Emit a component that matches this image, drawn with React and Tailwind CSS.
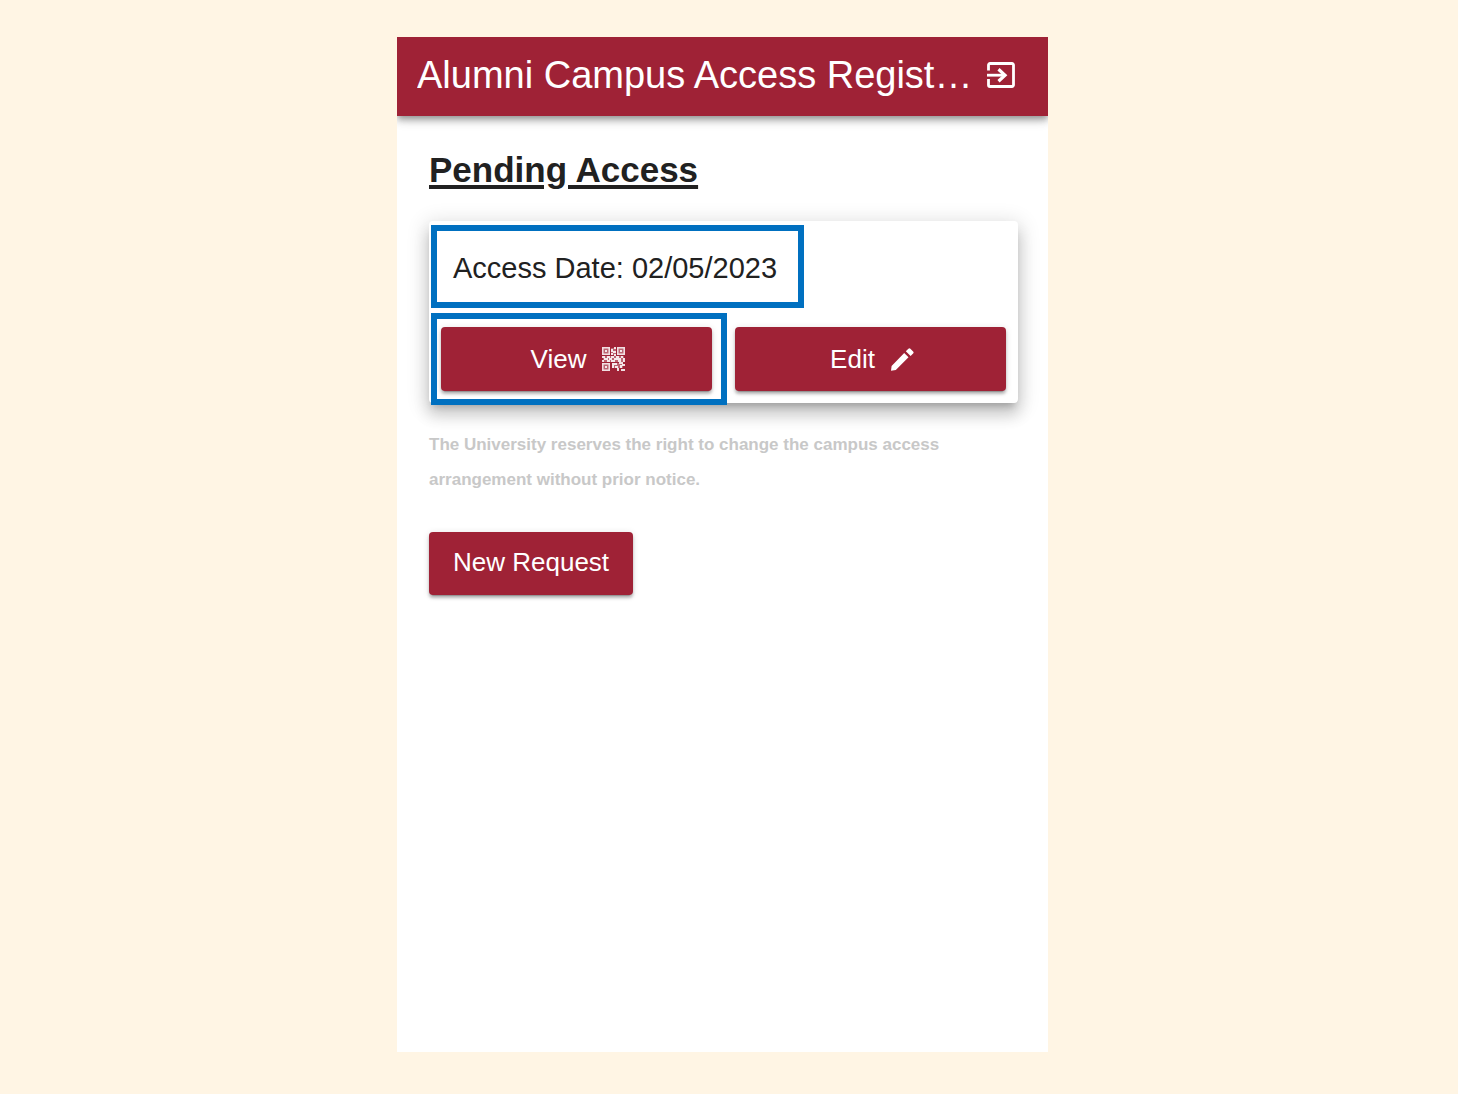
import React from "react";

const buttonBase =
  "flex items-center justify-center rounded bg-[#9f2236] text-[26px] leading-8 text-white shadow-[0_4px_1px_-3px_rgba(0,0,0,0.2),0_3px_3px_rgba(0,0,0,0.24),0_1px_7px_rgba(0,0,0,0.12)]";

function ExitIcon() {
  return (
    <svg viewBox="0 0 28 26" className="h-[26px] w-7" fill="none" stroke="currentColor" aria-hidden="true">
      <path d="M1.5 8.5V3a1.5 1.5 0 0 1 1.5-1.5h22A1.5 1.5 0 0 1 26.5 3v20a1.5 1.5 0 0 1-1.5 1.5H3A1.5 1.5 0 0 1 1.5 23v-6" strokeWidth="2.8" />
      <path d="M0 13.2h18" strokeWidth="2.8" />
      <path d="M11.5 7.2l6.5 6-6.5 6" strokeWidth="3.2" />
    </svg>
  );
}

function QrIcon() {
  return (
    <svg viewBox="0 0 23 24" className="h-6 w-[23px]" fill="currentColor" fillOpacity="0.85" aria-hidden="true">
      <path fillOpacity="0.3" d="M1 1h6v6H1zM16 1h6v6h-6zM1 17h6v6H1zM1 9h21v6H1zM9 1h5v7H9zM10 16h11v5H10z" />
      <path fillRule="evenodd" d="M0 0h8v8H0zM1.5 1.5v5h5v-5zM15 0h8v8h-8zM16.5 1.5v5h5v-5zM0 16h8v8H0zM1.5 17.5v5h5v-5z" />
      <path d="M3 3h2v2H3zM18 3h2v2h-2zM3 19h2v2H3zM12 0h2v2h-2zM9 2h2v3H9zM11 4h3v2h-3zM9 6h2v2H9zM12 7h2v2h-2zM0 9h3v2H0zM5 9h3v2H5zM9 9h3v2H9zM14 9h3v2h-3zM19 9h2v2h-2zM2 11h4v2H2zM7 11h3v2H7zM12 11h7v2h-7zM21 11h2v4h-2zM0 13h2v2H0zM5 13h3v2H5zM9 13h4v2H9zM16 13h3v2h-3zM10 16h5v2h-5zM17 15h4v2h-4zM10 18h2v3h-2zM13 19h3v2h-3zM18 18h2v3h-2zM20 17h3v2h-3zM15 21h2v3h-2zM19 22h4v2h-4z" />
    </svg>
  );
}

function PencilIcon() {
  return (
    <svg viewBox="0 0 23 23" className="h-[23px] w-[23px]" fill="currentColor" aria-hidden="true">
      <path d="M0 22.8L.6 18 13.200 5l4.300 4.300L4.800 22zM14.800 3.300l2.600-2.600a1.400 1.400 0 0 1 2 0l2.700 2.700a1.400 1.400 0 0 1 0 2l-2.500 2.500z" />
    </svg>
  );
}

export default function App() {
  return (
    <div className="min-h-screen bg-[#fff5e4] pt-[37px] pr-[29px] pb-[42px] pl-4 font-['Liberation_Sans',Arial,sans-serif] text-[#212121]">
      <div className="mx-auto min-h-[calc(100vh-79px)] w-full max-w-[651px] bg-white">
        <header className="flex items-start justify-between gap-2 bg-[#9f2236] pt-[15px] pr-[33px] pb-[17px] pl-5 text-white shadow-[0_3px_6px_-1px_rgba(0,0,0,0.3),0_6px_7px_rgba(0,0,0,0.14),0_1px_15px_rgba(0,0,0,0.12)] [clip-path:inset(0_0_-16px_0)]">
          <h1 className="truncate text-[38px] leading-[47px] font-normal">Alumni Campus Access Regist…</h1>
          <button type="button" aria-label="Sign out" className="mt-2.5 shrink-0">
            <ExitIcon />
          </button>
        </header>

        <main className="pt-8 pr-[30px] pl-8">
          <h2 className="text-[35px] leading-[44px] font-bold underline decoration-4 underline-offset-3">Pending Access</h2>

          <section className="mt-[29px] rounded bg-white px-3 pb-3 shadow-[0_7px_7px_-4px_rgba(0,0,0,0.2),0_12px_15px_1px_rgba(0,0,0,0.14),0_4px_20px_4px_rgba(0,0,0,0.12)]">
            <div className="flex h-[106px] items-center pb-3 pl-3">
              <div className="relative text-[29px] leading-9">
                Access Date: 02/05/2023
                <span className="pointer-events-none absolute -top-[25px] -right-[27px] -bottom-[22px] -left-[22px] border-6 border-[#0070c0]" />
              </div>
            </div>
            <div className="grid grid-cols-2 gap-[23px]">
              <div className="relative">
                <button type="button" className={`${buttonBase} h-16 w-full gap-4 pl-[3px]`}>
                  View
                  <QrIcon />
                </button>
                <span className="pointer-events-none absolute -top-3.5 -right-[15px] -bottom-3.5 -left-2.5 border-6 border-[#0070c0]" />
              </div>
              <button type="button" className={`${buttonBase} h-16 w-full gap-4 pl-[3px]`}>
                Edit
                <PencilIcon />
              </button>
            </div>
          </section>

          <p className="mt-6 text-[17px] leading-[35px] font-bold text-[#c8c8c8]">
            The University reserves the right to change the campus access arrangement without prior notice.
          </p>

          <button type="button" className={`${buttonBase} mt-[35px] px-6 pt-[14px] pb-[17px]`}>New Request</button>
        </main>
      </div>
    </div>
  );
}
